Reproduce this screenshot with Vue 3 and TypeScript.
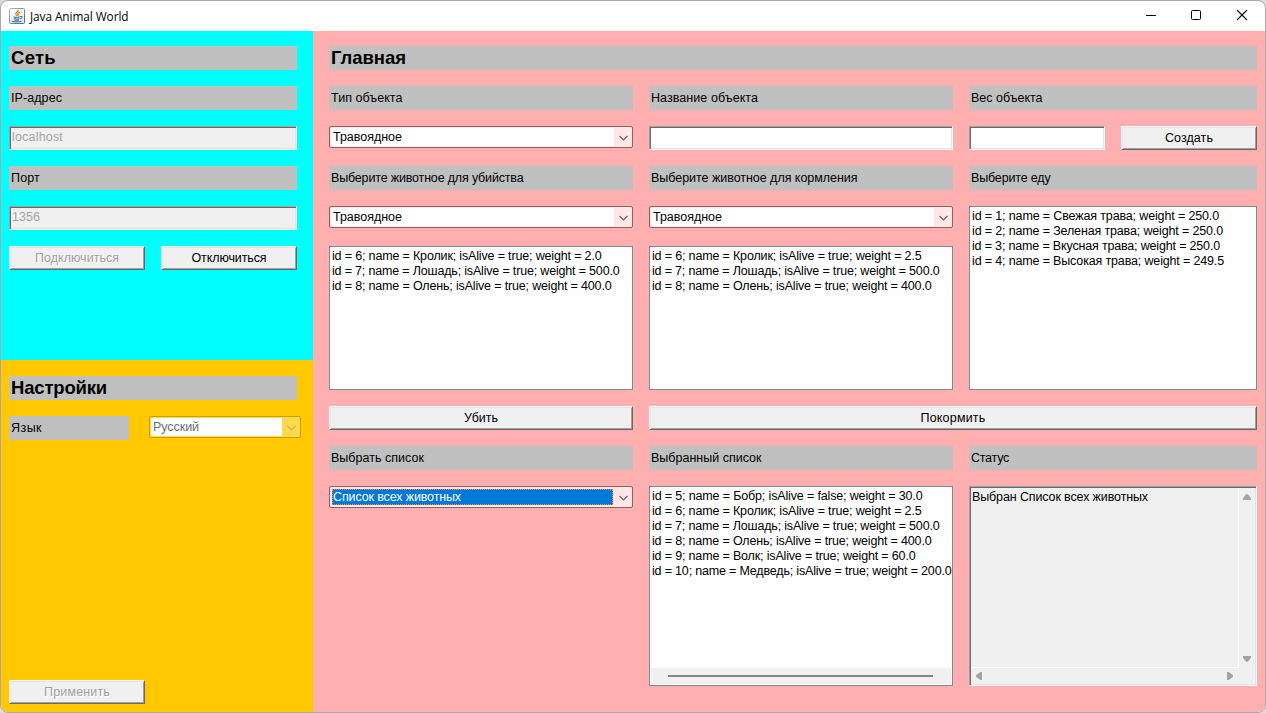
<script setup lang="ts">
import type { Directive } from 'vue'

interface Line { text: string; width: number }

/* Spreads glyphs so that a caption takes the given advance width. */
const fit = (el: HTMLElement, width: number): void => {
  el.style.letterSpacing = '0'
  const natural = el.getBoundingClientRect().width
  const count = Math.max((el.textContent ?? '').length, 1)
  el.style.letterSpacing = `${(width - natural) / count}px`
}
const vFit: Directive<HTMLElement, number> = {
  mounted: (el, binding) => fit(el, binding.value),
  updated: (el, binding) => fit(el, binding.value),
}

const herbivoresToKill: Line[] = [
  { text: 'id = 6; name = Кролик; isAlive = true; weight = 2.0', width: 269.5 },
  { text: 'id = 7; name = Лошадь; isAlive = true; weight = 500.0', width: 287.5 },
  { text: 'id = 8; name = Олень; isAlive = true; weight = 400.0', width: 279.5 },
]
const herbivoresToFeed: Line[] = [
  { text: 'id = 6; name = Кролик; isAlive = true; weight = 2.5', width: 269.5 },
  { text: 'id = 7; name = Лошадь; isAlive = true; weight = 500.0', width: 287.5 },
  { text: 'id = 8; name = Олень; isAlive = true; weight = 400.0', width: 279.5 },
]
const food: Line[] = [
  { text: 'id = 1; name = Свежая трава; weight = 250.0', width: 247 },
  { text: 'id = 2; name = Зеленая трава; weight = 250.0', width: 251 },
  { text: 'id = 3; name = Вкусная трава; weight = 250.0', width: 248 },
  { text: 'id = 4; name = Высокая трава; weight = 249.5', width: 252 },
]
const allAnimals: Line[] = [
  { text: 'id = 5; name = Бобр; isAlive = false; weight = 30.0', width: 270.5 },
  { text: 'id = 6; name = Кролик; isAlive = true; weight = 2.5', width: 269.5 },
  { text: 'id = 7; name = Лошадь; isAlive = true; weight = 500.0', width: 287.5 },
  { text: 'id = 8; name = Олень; isAlive = true; weight = 400.0', width: 279.5 },
  { text: 'id = 9; name = Волк; isAlive = true; weight = 60.0', width: 263.5 },
  { text: 'id = 10; name = Медведь; isAlive = true; weight = 200.0', width: 299.5 },
]
</script>

<template>
  <div class="window">
    <header class="titlebar">
      <svg class="logo" width="16" height="16" viewBox="0 0 16 16">
        <defs>
          <linearGradient id="frame" x1="0" y1="0" x2="1" y2="1">
            <stop offset="0" stop-color="#a9b7c2" />
            <stop offset="1" stop-color="#456b8b" />
          </linearGradient>
          <linearGradient id="face" x1="0" y1="0" x2="0" y2="1">
            <stop offset="0" stop-color="#ffffff" />
            <stop offset="1" stop-color="#dfe6eb" />
          </linearGradient>
        </defs>
        <rect x=".5" y=".5" width="15" height="15" rx="1" fill="url(#face)" stroke="url(#frame)" />
        <path d="M9.4 1.8C10 3.7 5.9 4.3 6.8 6.3L7.9 7.9M11 4.2C8.4 5.2 8.2 5.8 9 6.5 9.5 7 9.2 7.5 8.7 8" fill="none" stroke="#e8811a" stroke-width="1.3" />
        <path d="M4.6 8.7C5.5 9.5 9 9.3 10.8 8.7M5 10.6C6.6 11.2 8.8 11.1 10.4 10.5M5.4 12C6.9 12.4 8.6 12.3 9.9 11.9M3 13.3C5 14.1 10.5 14 12.6 13.2M11.1 8.6C13.8 7.8 14 10.1 11.2 10.9" fill="none" stroke="#45769b" stroke-width="1.05" />
      </svg>
      <span v-fit="98.5" class="caption">Java Animal World</span>
      <svg class="controls" width="104" height="12" viewBox="0 0 104 12" fill="none" stroke="#000">
        <path d="M1 5.5H11" />
        <rect x="46.5" y=".5" width="9" height="9" rx="1" />
        <path d="M92 0L102 10M102 0L92 10" stroke-width="1.1" />
      </svg>
    </header>

    <div class="body">
      <aside>
        <section class="network">
          <h2 class="label"><span v-fit="45">Сеть</span></h2>
          <div class="label"><span v-fit="51">IP-адрес</span></div>
          <div class="field off"><span v-fit="51">localhost</span></div>
          <div class="label"><span v-fit="29">Порт</span></div>
          <div class="field off"><span v-fit="28">1356</span></div>
          <div class="pair">
            <button class="btn" disabled><span v-fit="84">Подключиться</span></button>
            <button class="btn"><span v-fit="75">Отключиться</span></button>
          </div>
        </section>
        <section class="settings">
          <h2 class="label"><span v-fit="96">Настройки</span></h2>
          <div class="language">
            <div class="label"><span v-fit="31">Язык</span></div>
            <div class="combo dim">
              <div class="value"><span v-fit="46">Русский</span></div>
              <svg class="arrow" width="18" height="20" viewBox="0 0 18 20"><path d="M5.5 9L9.5 13L13.5 9" /></svg>
            </div>
          </div>
          <button class="btn apply" disabled><span v-fit="66">Применить</span></button>
        </section>
      </aside>

      <main>
        <h2 class="label wide"><span v-fit="75">Главная</span></h2>

        <div class="label"><span v-fit="71.5">Тип объекта</span></div>
        <div class="label"><span v-fit="107">Название объекта</span></div>
        <div class="label"><span v-fit="71.5">Вес объекта</span></div>

        <div class="combo">
          <div class="value"><span v-fit="69">Травоядное</span></div>
          <svg class="arrow" width="18" height="20" viewBox="0 0 18 20"><path d="M5.5 9L9.5 13L13.5 9" /></svg>
        </div>
        <div class="field"></div>
        <div class="pair">
          <div class="field"></div>
          <button class="btn"><span v-fit="48">Создать</span></button>
        </div>

        <div class="label"><span v-fit="192.5">Выберите животное для убийства</span></div>
        <div class="label"><span v-fit="206.5">Выберите животное для кормления</span></div>
        <div class="label"><span v-fit="79.5">Выберите еду</span></div>

        <div class="combo">
          <div class="value"><span v-fit="69">Травоядное</span></div>
          <svg class="arrow" width="18" height="20" viewBox="0 0 18 20"><path d="M5.5 9L9.5 13L13.5 9" /></svg>
        </div>
        <div class="combo">
          <div class="value"><span v-fit="69">Травоядное</span></div>
          <svg class="arrow" width="18" height="20" viewBox="0 0 18 20"><path d="M5.5 9L9.5 13L13.5 9" /></svg>
        </div>
        <ul class="list tall">
          <li v-for="item in food" :key="item.text"><span v-fit="item.width">{{ item.text }}</span></li>
        </ul>

        <ul class="list">
          <li v-for="item in herbivoresToKill" :key="item.text"><span v-fit="item.width">{{ item.text }}</span></li>
        </ul>
        <ul class="list">
          <li v-for="item in herbivoresToFeed" :key="item.text"><span v-fit="item.width">{{ item.text }}</span></li>
        </ul>

        <button class="btn"><span v-fit="34">Убить</span></button>
        <button class="btn double"><span v-fit="65">Покормить</span></button>

        <div class="label"><span v-fit="93">Выбрать список</span></div>
        <div class="label"><span v-fit="110.5">Выбранный список</span></div>
        <div class="label"><span v-fit="38">Статус</span></div>

        <div class="combo">
          <div class="value focused"><span v-fit="128">Список всех животных</span></div>
          <svg class="arrow" width="18" height="20" viewBox="0 0 18 20"><path d="M5.5 9L9.5 13L13.5 9" /></svg>
        </div>
        <ul class="list scrolled">
          <li v-for="item in allAnimals" :key="item.text"><span v-fit="item.width">{{ item.text }}</span></li>
          <li class="track"><i class="thumb"></i></li>
        </ul>
        <div class="status">
          <div class="log"><span v-fit="176">Выбран Список всех животных</span></div>
          <div class="vbar">
            <svg width="10" height="8" viewBox="0 0 10 8"><path d="M4 1.2H6L9 5.4V7H1V5.4Z" /></svg>
            <svg width="10" height="8" viewBox="0 0 10 8"><path d="M4 6.8H6L9 2.6V1H1V2.6Z" /></svg>
          </div>
          <div class="hbar">
            <svg width="8" height="10" viewBox="0 0 8 10"><path d="M1.2 4V6L5.4 9H7V1H5.4Z" /></svg>
            <svg width="8" height="10" viewBox="0 0 8 10"><path d="M6.8 4V6L2.6 9H1V1H2.6Z" /></svg>
          </div>
        </div>
      </main>
    </div>
  </div>
</template>

<style>
body {
  margin: 0;
  background: #dcdcdc;
  overflow: hidden;
}
</style>

<style scoped>
* {
  box-sizing: border-box;
}
.window {
  width: 1266px;
  height: 713px;
  display: flex;
  flex-direction: column;
  border: 1px solid #a8a8a8;
  border-radius: 8px;
  overflow: hidden;
  background: #fff;
  color: #000;
  font: 12.5px/15px "Liberation Sans", Arial, sans-serif;
}
span {
  display: inline-block;
  white-space: pre;
}
.titlebar {
  height: 30px;
  flex: none;
  display: flex;
  align-items: center;
  padding: 0 16px 0 8px;
}
.logo {
  margin-right: 5px;
}
.caption {
  font: 11.8px/16px "Open Sans", "Noto Sans", sans-serif;
}
.controls {
  margin-left: auto;
}
.body {
  flex: 1;
  display: flex;
  min-height: 0;
}
aside {
  width: 312px;
  display: flex;
  flex-direction: column;
}
section {
  display: flex;
  flex-direction: column;
  gap: 16px;
  padding: 15px 16px 0 8px;
}
.network {
  height: 329px;
  background: #00ffff;
}
.settings {
  flex: 1;
  padding-top: 16px;
  padding-bottom: 8px;
  background: #ffc800;
}
.language {
  display: grid;
  grid-template-columns: 120px 152px;
  gap: 20px;
}
main {
  flex: 1;
  display: grid;
  grid-template-columns: 304px 304px 288px;
  grid-template-rows: repeat(5, 24px) 144px 24px 24px 200px;
  gap: 16px;
  padding: 15px 8px 0 16px;
  background: #ffafaf;
}
.label {
  height: 24px;
  margin: 0;
  padding-left: 2px;
  background: #c0c0c0;
  font-size: 12.5px;
  font-weight: normal;
  line-height: 24px;
}
h2.label {
  font-size: 18.5px;
  font-weight: bold;
}
.wide {
  grid-column: 1 / -1;
}
.double {
  grid-column: span 2;
}
.pair {
  display: grid;
  grid-template-columns: 1fr 1fr;
  gap: 16px;
}
.field {
  height: 24px;
  padding: 3px 0 0 2px;
  border: 1px solid;
  border-color: #a0a0a0 #fff #fff #a0a0a0;
  box-shadow: inset 1px 1px #696969, inset -1px -1px #e3e3e3;
  background: #fff;
}
.field.off {
  background: #f0f0f0;
  color: #a5a5a5;
}
.btn {
  height: 24px;
  display: flex;
  justify-content: center;
  align-items: center;
  margin: 0;
  padding: 0;
  border: 1px solid;
  border-color: #fff #696969 #696969 #fff;
  border-radius: 0;
  box-shadow: inset 1px 1px #e3e3e3, inset -1px -1px #a0a0a0;
  background: #f0f0f0;
  color: #000;
  font: inherit;
}
.btn:disabled {
  color: #a0a0a0;
  text-shadow: 1px 1px #fff;
}
.btn.apply {
  width: 136px;
  margin-top: auto;
}
.combo {
  height: 22px;
  display: flex;
  border: 1px solid #8c6060;
  border-radius: 2px;
  background: #ffe7e7;
}
.value {
  flex: 1;
  margin: 1px 0 1px 1px;
  padding: 2px 0 0 2px;
  background: #fff;
}
.value.focused {
  margin: 2px 1px 2px 2px;
  padding: 1px 0 0 1px;
  background: #0078d7;
  color: #fff;
  outline: 1px dotted #ff8728;
  outline-offset: -1px;
}
.arrow {
  fill: none;
  stroke: #6f6464;
  stroke-width: 1.1;
}
.combo.dim {
  border-color: #cca000;
  background: #ffd84d;
  color: #6d6d6d;
}
.dim .arrow {
  stroke: #c6b06a;
}
.list {
  margin: 0;
  padding: 2px 0 0 2px;
  border: 1px solid #828790;
  background: #fff;
  list-style: none;
}
.list li {
  height: 15px;
}
.tall {
  grid-area: 5 / 3 / 7 / 4;
}
.scrolled {
  display: flex;
  flex-direction: column;
  padding-bottom: 1px;
}
.list .track {
  height: 16px;
  display: flex;
  align-items: center;
  margin: auto 1px 0 -1px;
  padding: 0 18px 0 17px;
  background: #f0f0f0;
}
.thumb {
  flex: 1;
  height: 2px;
  background: #858585;
}
.status {
  display: grid;
  grid-template: 180px 16px / 268px 16px;
  padding: 1px;
  border: 1px solid;
  border-color: #a0a0a0 #fff #fff #a0a0a0;
  box-shadow: inset 1px 1px #696969, inset -1px -1px #e3e3e3;
  background: #f0f0f0;
}
.log {
  padding: 2px 1px;
  border: 1px solid #fff;
  border-width: 0 1px 1px 0;
}
.status svg {
  fill: #a3a3a3;
}
.vbar,
.hbar {
  display: flex;
  justify-content: space-between;
  align-items: center;
}
.vbar {
  flex-direction: column;
  padding: 5px 0;
}
.hbar {
  padding: 0 5px 0 4px;
}
</style>
